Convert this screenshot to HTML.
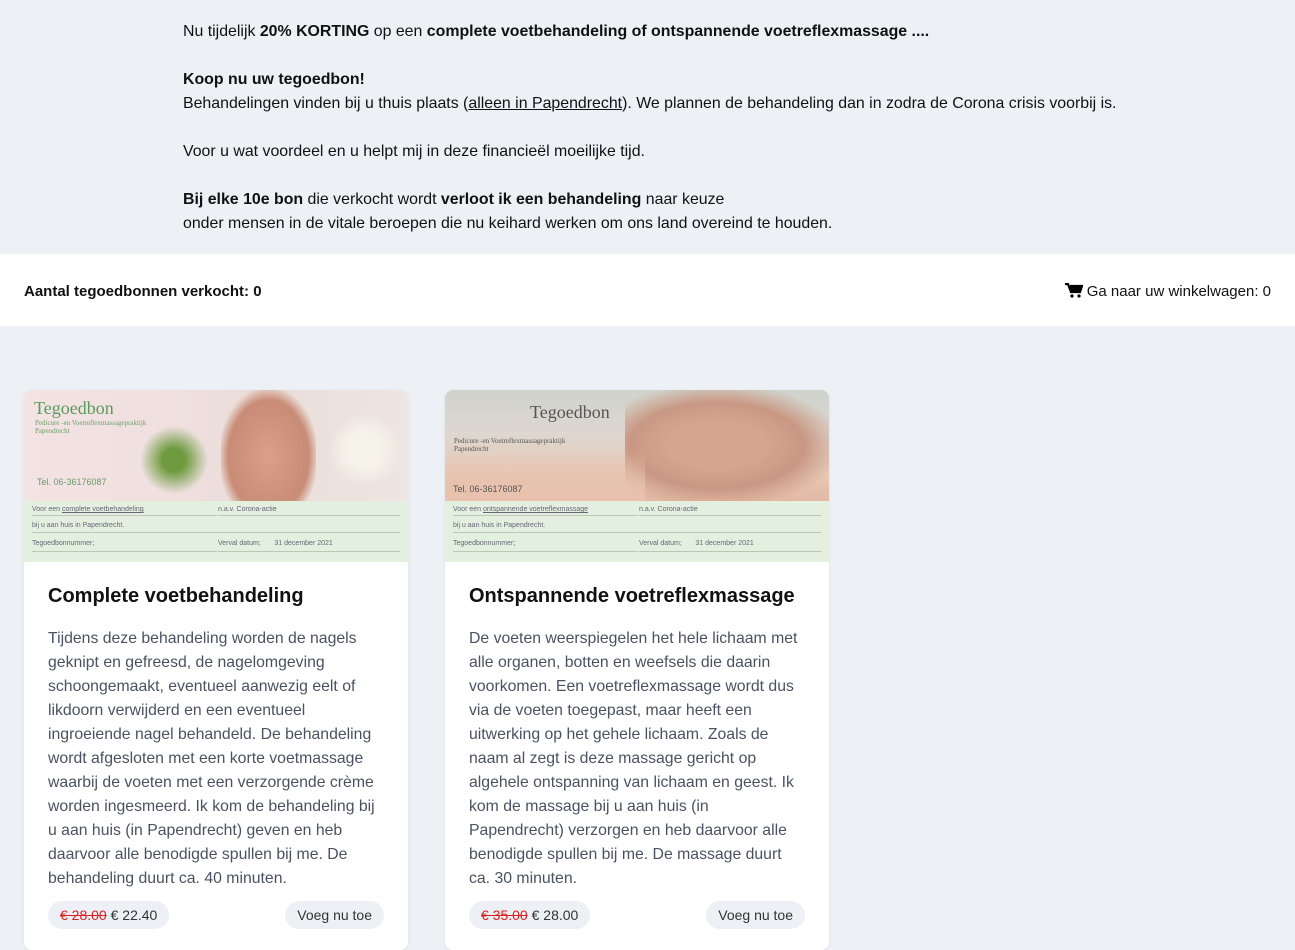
<!DOCTYPE html>
<html><head><meta charset="utf-8"><style>
*{box-sizing:border-box;margin:0;padding:0}
body{width:1295px;height:941px;overflow:hidden;background:#edf1f5;font-family:"Liberation Sans",sans-serif;color:#111}
.top{position:absolute;left:183px;top:20px;font-size:15.9px;line-height:24px;white-space:nowrap}
.top p{margin-bottom:24px}
.band{position:absolute;left:0;top:254px;width:1295px;height:72px;background:#fff;font-size:15px}
.band .l{position:absolute;left:24px;top:29px;font-weight:bold}
.band .r{position:absolute;right:24px;top:29px}
.card{position:absolute;top:390px;width:384px;height:560px;background:#fff;border-radius:8px;overflow:hidden;box-shadow:0 1px 3px rgba(0,0,0,.08)}
.img{position:relative;height:172px;overflow:hidden}
.photo{position:absolute;left:0;top:0;width:100%;height:111px}
.form{position:absolute;left:0;top:111px;width:100%;height:61px;background:#e3efdf;font-size:7px;color:#667}
.form div{position:absolute;border-bottom:1px solid #b9c9b5}
.card h2{position:absolute;left:24px;top:195px;font-size:20px;font-weight:bold;color:#111;white-space:nowrap}
.card .txt{position:absolute;left:24px;top:237px;width:360px;font-size:15.8px;line-height:24px;color:#4a5260;white-space:nowrap}
.pill{position:absolute;top:511px;height:28px;line-height:28px;border-radius:14px;background:#edf1f5;font-size:14px;color:#333;padding:0 12px}
.strike{color:#d92020;text-decoration:line-through}
.tg{position:absolute;font-family:"Liberation Serif",serif;font-size:18px}
.sm{position:absolute;font-family:"Liberation Serif",serif;font-size:7px;line-height:8px}
.tel{position:absolute;font-size:9px}
</style></head><body>
<div class="top">
<p>Nu tijdelijk <b>20% KORTING</b> op een <b>complete voetbehandeling of ontspannende voetreflexmassage ....</b></p>
<p><b>Koop nu uw tegoedbon!</b><br>Behandelingen vinden bij u thuis plaats (<u>alleen in Papendrecht</u>). We plannen de behandeling dan in zodra de Corona crisis voorbij is.</p>
<p>Voor u wat voordeel en u helpt mij in deze financieël moeilijke tijd.</p>
<p><b>Bij elke 10e bon</b> die verkocht wordt <b>verloot ik een behandeling</b> naar keuze<br>onder mensen in de vitale beroepen die nu keihard werken om ons land overeind te houden.</p>
</div>
<div class="band"><div class="l">Aantal tegoedbonnen verkocht: 0</div>
<div class="r"><svg width="18" height="15" viewBox="0 0 18 15" style="vertical-align:-2px"><path d="M0 1h3l3 8h9l2-6H5" fill="none" stroke="#000" stroke-width="2.2"/><path d="M5 3h12l-2 6H6z" fill="#000"/><circle cx="7" cy="13" r="1.6"/><circle cx="14" cy="13" r="1.6"/></svg> Ga naar uw winkelwagen: 0</div></div>

<div class="card" style="left:24px">
<div class="img">
<div class="photo" style="background:linear-gradient(90deg,#f3e3e3 0%,#efe0df 40%,#e9dcd8 60%,#eee6e2 100%)">
<div style="position:absolute;left:197px;top:0;width:95px;height:111px;background:radial-gradient(ellipse at 50% 60%,#d9a08a,#c98c76 60%,transparent 75%)"></div>
<div style="position:absolute;left:110px;top:30px;width:80px;height:80px;background:radial-gradient(ellipse,#6f9a3f 20%,transparent 60%)"></div>
<div style="position:absolute;left:300px;top:20px;width:80px;height:80px;background:radial-gradient(ellipse,#f6f3ea 30%,transparent 65%)"></div>
<div class="tg" style="left:10px;top:8px;color:#5a9a5e">Tegoedbon</div>
<div class="sm" style="left:11px;top:29px;color:#6aa068">Pedicure -en Voetreflexmassagepraktijk<br>Papendrecht</div>
<div class="tel" style="left:13px;top:87px;color:#6a9a6a">Tel. 06-36176087</div>
</div>
<div class="form">
<div style="left:8px;top:0;width:185px;height:15px;padding-top:5px">Voor een <u>complete voetbehandeling</u></div>
<div style="left:194px;top:0;width:182px;height:15px;padding-top:5px">n.a.v. Corona-actie</div>
<div style="left:8px;top:15px;width:368px;height:17px;padding-top:6px">bij u aan huis in Papendrecht.</div>
<div style="left:8px;top:32px;width:185px;height:19px;padding-top:7px">Tegoedbonnummer;</div>
<div style="left:194px;top:32px;width:182px;height:19px;padding-top:7px">Verval datum; &nbsp; &nbsp; &nbsp; 31 december 2021</div>
</div>
</div>
<h2>Complete voetbehandeling</h2>
<div class="txt">Tijdens deze behandeling worden de nagels<br>geknipt en gefreesd, de nagelomgeving<br>schoongemaakt, eventueel aanwezig eelt of<br>likdoorn verwijderd en een eventueel<br>ingroeiende nagel behandeld. De behandeling<br>wordt afgesloten met een korte voetmassage<br>waarbij de voeten met een verzorgende crème<br>worden ingesmeerd. Ik kom de behandeling bij<br>u aan huis (in Papendrecht) geven en heb<br>daarvoor alle benodigde spullen bij me. De<br>behandeling duurt ca. 40 minuten.</div>
<div class="pill" style="left:24px"><span class="strike">€ 28.00</span> € 22.40</div>
<div class="pill" style="right:24px">Voeg nu toe</div>
</div>

<div class="card" style="left:445px">
<div class="img">
<div class="photo" style="background:linear-gradient(180deg,#cfd3cc 0%,#ddd7d0 40%,#e8c9b6 75%,#e2b9a4 100%)">
<div style="position:absolute;left:180px;top:0;width:204px;height:111px;background:radial-gradient(ellipse at 45% 50%,#d7a58e 30%,#c99884 55%,transparent 80%)"></div>
<div style="position:absolute;left:0;top:60px;width:200px;height:51px;background:linear-gradient(180deg,transparent,#e8c2ae)"></div>
<div class="tg" style="left:85px;top:12px;color:#555">Tegoedbon</div>
<div class="sm" style="left:9px;top:47px;color:#555">Pedicure -en Voetreflexmassagepraktijk<br>Papendrecht</div>
<div class="tel" style="left:8px;top:94px;color:#555">Tel. 06-36176087</div>
</div>
<div class="form">
<div style="left:8px;top:0;width:185px;height:15px;padding-top:5px">Voor een <u>ontspannende voetreflexmassage</u></div>
<div style="left:194px;top:0;width:182px;height:15px;padding-top:5px">n.a.v. Corona-actie</div>
<div style="left:8px;top:15px;width:368px;height:17px;padding-top:6px">bij u aan huis in Papendrecht.</div>
<div style="left:8px;top:32px;width:185px;height:19px;padding-top:7px">Tegoedbonnummer;</div>
<div style="left:194px;top:32px;width:182px;height:19px;padding-top:7px">Verval datum; &nbsp; &nbsp; &nbsp; 31 december 2021</div>
</div>
</div>
<h2>Ontspannende voetreflexmassage</h2>
<div class="txt">De voeten weerspiegelen het hele lichaam met<br>alle organen, botten en weefsels die daarin<br>voorkomen. Een voetreflexmassage wordt dus<br>via de voeten toegepast, maar heeft een<br>uitwerking op het gehele lichaam. Zoals de<br>naam al zegt is deze massage gericht op<br>algehele ontspanning van lichaam en geest. Ik<br>kom de massage bij u aan huis (in<br>Papendrecht) verzorgen en heb daarvoor alle<br>benodigde spullen bij me. De massage duurt<br>ca. 30 minuten.</div>
<div class="pill" style="left:24px"><span class="strike">€ 35.00</span> € 28.00</div>
<div class="pill" style="right:24px">Voeg nu toe</div>
</div>
</body></html>
